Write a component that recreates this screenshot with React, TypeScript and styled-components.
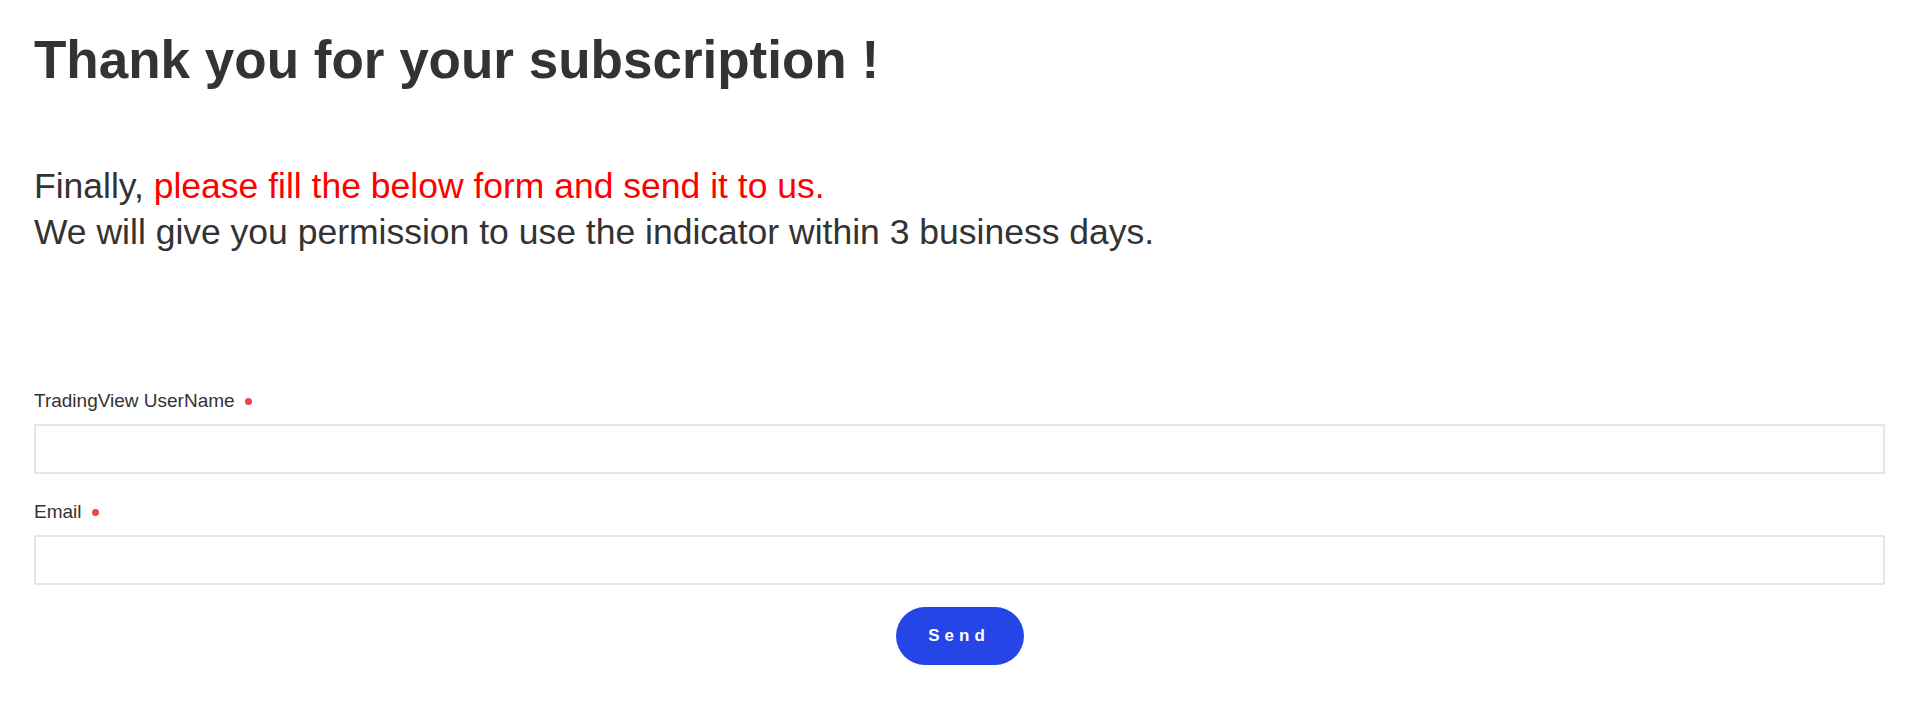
import styled, { createGlobalStyle } from "styled-components";

const GlobalStyle = createGlobalStyle`
  body {
    margin: 0;
    background: #ffffff;
    font-family: "Liberation Sans", Arial, sans-serif;
    color: #333333;
  }
`;

const Page = styled.div`
  padding: 0 35px 0 34px;
`;

const Title = styled.h1`
  margin: 0;
  padding-top: 29px;
  font-size: 53px;
  line-height: 62px;
  font-weight: 700;
  color: #333333;
`;

const Message = styled.p`
  margin: 72px 0 0;
  font-size: 35.5px;
  line-height: 46px;
  color: #333333;

  .accent {
    color: #ff0000;
  }
`;

const Form = styled.form`
  display: flex;
  flex-direction: column;
  margin-top: 134px;
`;

const Field = styled.div`
  display: flex;
  flex-direction: column;

  & + & {
    margin-top: 26px;
  }
`;

const Label = styled.label`
  display: flex;
  align-items: center;
  gap: 10px;
  font-size: 19px;
  line-height: 24px;
  color: #333333;
  margin-bottom: 11px;
`;

const Required = styled.span`
  width: 7px;
  height: 7px;
  border-radius: 50%;
  background: #ef4444;
`;

const Input = styled.input`
  box-sizing: border-box;
  width: 100%;
  height: 50px;
  border: 2px solid #e6e6e6;
  border-radius: 0;
  background: #ffffff;
  padding: 0 14px;
  font-size: 16px;
  font-family: inherit;
  outline: none;
`;

const Actions = styled.div`
  display: flex;
  justify-content: center;
  margin-top: 22px;
`;

const Button = styled.button`
  width: 128px;
  height: 58px;
  border: none;
  border-radius: 29px;
  background: #2545e6;
  color: #ffffff;
  font-family: "Liberation Sans", Arial, sans-serif;
  font-weight: 700;
  font-size: 17px;
  letter-spacing: 5px;
  padding-left: 5px;
  cursor: pointer;
`;

const App = () => {
  return (
    <Page>
      <GlobalStyle />
      <Title>Thank you for your subscription !</Title>
      <Message>
        Finally, <span className="accent">please fill the below form and send it to us.</span>
        <br />
        We will give you permission to use the indicator within 3 business days.
      </Message>
      <Form onSubmit={(e) => e.preventDefault()}>
        <Field>
          <Label>
            TradingView UserName
            <Required />
          </Label>
          <Input type="text" />
        </Field>
        <Field>
          <Label>
            Email
            <Required />
          </Label>
          <Input type="email" />
        </Field>
        <Actions>
          <Button type="submit">Send</Button>
        </Actions>
      </Form>
    </Page>
  );
};

export default App;
